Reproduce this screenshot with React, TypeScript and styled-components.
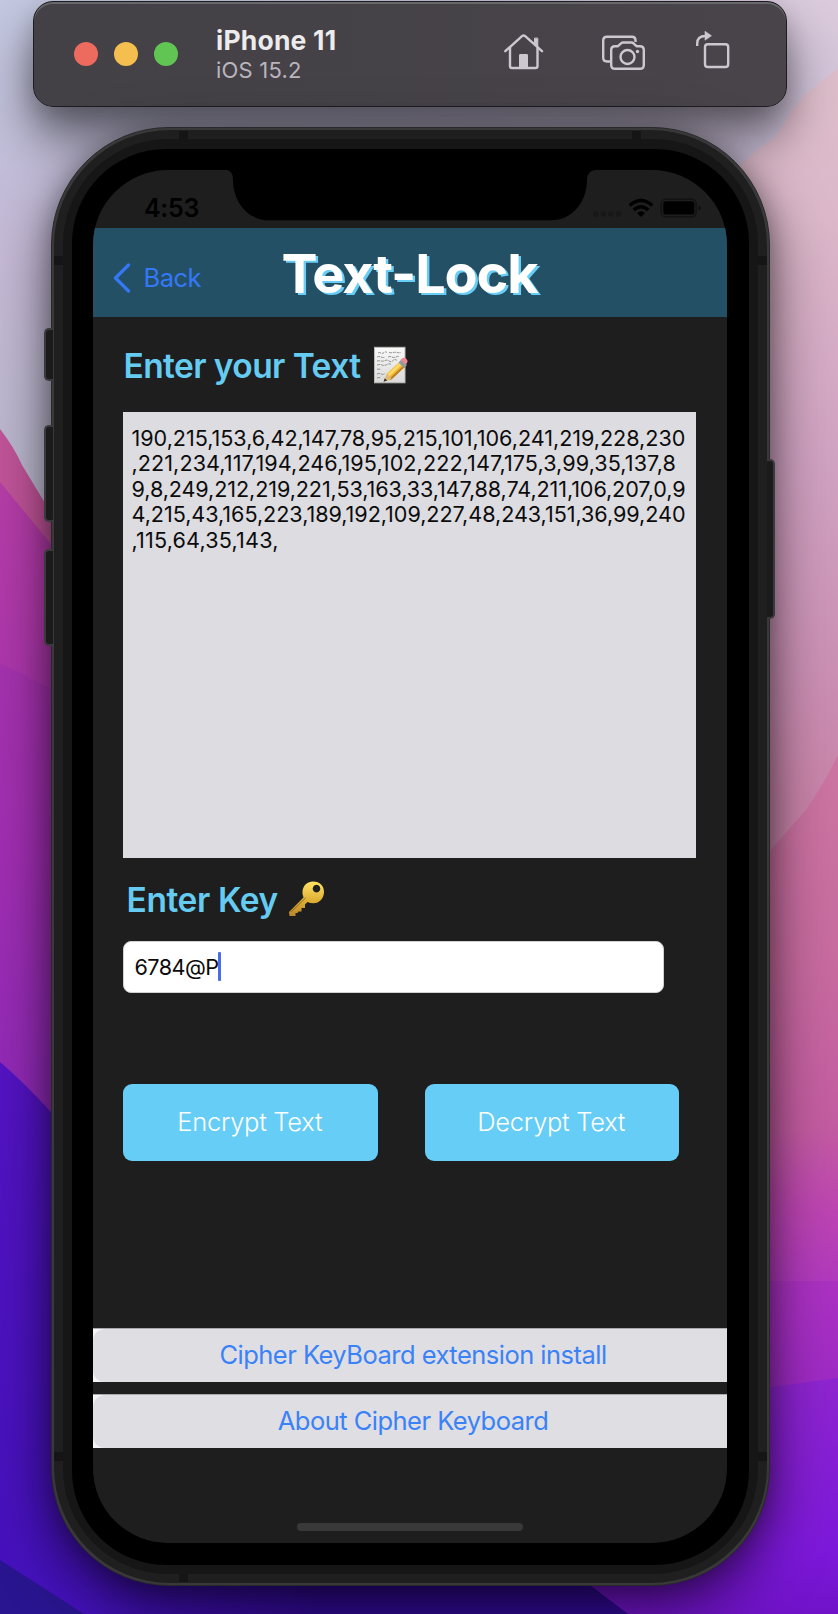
import React from "react";
import styled, { createGlobalStyle } from "styled-components";

const GlobalStyle = createGlobalStyle`
  * { box-sizing: border-box; }
  body {
    margin: 0;
    background: #b8b2cc;
    font-family: Inter, "Liberation Sans", sans-serif;
  }
`;

const Desktop = styled.main`
  position: relative;
  width: 838px;
  height: 1614px;
  overflow: hidden;
  display: flex;
  flex-direction: column;
  align-items: flex-start;
`;

const WallpaperArt = styled.svg`
  position: absolute;
  inset: 0;
`;

const Toolbar = styled.header`
  position: relative;
  display: flex;
  align-items: center;
  width: 754px;
  height: 106px;
  margin: 1px 0 0 33px;
  padding-left: 40px;
  border: 1px solid #1d1c20;
  border-radius: 20px;
  background: linear-gradient(90deg, #434046, #48444a);
  box-shadow: inset 0 2px 0 #68686b, 0 30px 48px rgba(0, 0, 0, 0.5),
    0 8px 22px rgba(0, 0, 0, 0.16);
`;

const Lights = styled.div`
  display: flex;
  gap: 16px;
  width: 142px;
`;

const Light = styled.span<{ $color: string }>`
  width: 24px;
  height: 24px;
  border-radius: 50%;
  background: ${(p) => p.$color};
`;

const DeviceInfo = styled.div`
  width: 286px;
  white-space: nowrap;
`;

const DeviceName = styled.h1`
  margin: 0;
  font-size: 26.5px;
  line-height: 31px;
  font-weight: 700;
  letter-spacing: 0.2px;
  color: #ececec;
`;

const DeviceOs = styled.p`
  margin: 0;
  font-size: 22px;
  line-height: 28px;
  letter-spacing: 0.2px;
  color: #b9b5bd;
`;

const ToolIcons = styled.div`
  display: flex;
  height: 44px;
  margin-top: -4px;
`;

const Phone = styled.section`
  position: relative;
  width: 719px;
  height: 1459px;
  margin: 20px 0 0 50.5px;
  padding: 2px;
  border-radius: 118px;
  background: #39393a;
  border: 1px solid #29282a;
  box-shadow: 0 22px 60px rgba(0, 0, 0, 0.58), 0 2px 24px rgba(0, 0, 0, 0.28);
`;

const Frame = styled.div`
  position: relative;
  width: 100%;
  height: 100%;
  padding: 9px;
  border-radius: 116px;
  background: #1f1f1f;
`;

const InnerFrame = styled.div`
  position: relative;
  height: 100%;
  padding: 9.5px 9px;
  border-radius: 105px;
  background: #161616;
`;

const Bezel = styled.div`
  height: 100%;
  padding: 21px 22px 22px 21px;
  border-radius: 94px;
  background: #000;
`;

const Antenna = styled.i<{ $x: number; $y: number }>`
  position: absolute;
  left: ${(p) => p.$x}px;
  top: ${(p) => p.$y}px;
  width: 9px;
  height: 9px;
  background: #151515;
`;

const SideButton = styled.i<{ $top: number; $height: number; $right?: boolean }>`
  position: absolute;
  top: ${(p) => p.$top}px;
  ${(p) => (p.$right ? "right: -6px;" : "left: -8px;")}
  width: 9px;
  height: ${(p) => p.$height}px;
  border: 2px solid #3a393b;
  ${(p) => (p.$right ? "border-left: 0;" : "border-right: 0;")}
  border-radius: ${(p) => (p.$right ? "0 5px 5px 0" : "5px 0 0 5px")};
  background: #1b1b1b;
`;

const Screen = styled.div`
  display: flex;
  flex-direction: column;
  height: 100%;
  border-radius: 75px;
  overflow: hidden;
  background: #1e1e1e;
`;

const StatusBar = styled.div`
  position: relative;
  flex: none;
  display: flex;
  justify-content: space-between;
  height: 58px;
  padding: 23px 25px 0 51.5px;
`;

const Clock = styled.span`
  position: relative;
  font-size: 25px;
  line-height: 30px;
  font-weight: 600;
  letter-spacing: -0.3px;
  color: #000;
`;

const NotchArt = styled.svg`
  position: absolute;
  left: 130px;
  top: 0;
`;

const StatusIcons = styled.svg`
  position: relative;
  margin-top: 4px;
`;

const NavBar = styled.nav`
  flex: none;
  display: grid;
  grid-template-columns: 189px 1fr;
  align-items: center;
  height: 89px;
  background: #245066;
`;

const BackLink = styled.a`
  display: flex;
  align-items: center;
  gap: 13px;
  padding: 11px 0 0 20px;
  font-size: 25.5px;
  line-height: 32px;
  letter-spacing: -0.5px;
  color: #3478f6;
`;

const AppTitle = styled.h2`
  margin: 0;
  padding-top: 3px;
  font-size: 54px;
  line-height: 60px;
  font-weight: 700;
  letter-spacing: -1.1px;
  color: #fff;
  text-shadow: 2.5px 1.5px 0 #68cef6;
  white-space: nowrap;
`;

const Content = styled.div`
  display: flex;
  flex-direction: column;
  padding: 0 30.5px;
  height: 1011px;
  flex: none;
`;

const FieldLabel = styled.label<{ $indent: number }>`
  display: flex;
  align-items: center;
  padding-left: ${(p) => p.$indent}px;
  font-size: 33.5px;
  line-height: 40px;
  font-weight: 600;
  color: #66cbf1;
  white-space: nowrap;

  svg {
    margin-top: -2px;
  }
`;

const TextLabel = styled(FieldLabel)`
  margin-top: 29px;
  gap: 14px;
  letter-spacing: -0.58px;
`;

const KeyLabel = styled(FieldLabel)`
  margin-top: 22px;
  gap: 10px;
  letter-spacing: -0.4px;
`;

const CipherText = styled.div`
  height: 446px;
  margin-top: 26px;
  padding: 14px 0 0 8.5px;
  background: #dddce1;
  color: #0c0c0c;
  font-size: 21.6px;
  line-height: 25.6px;
  white-space: nowrap;
`;

const CipherLine = styled.div<{ $tracking: number }>`
  letter-spacing: ${(p) => p.$tracking}px;
`;

const KeyInput = styled.div`
  display: flex;
  align-items: center;
  width: 541px;
  height: 52px;
  margin-top: 21px;
  padding-left: 10.5px;
  border: 1px solid #d0d0d2;
  border-radius: 8px;
  background: #fff;
  color: #0c0c0c;
  font-size: 21.6px;
  letter-spacing: -0.55px;
`;

const Caret = styled.i`
  width: 3px;
  height: 29px;
  border-radius: 1px;
  background: #4a6ce8;
`;

const Actions = styled.div`
  display: flex;
  gap: 47px;
  margin-top: 91.5px;
`;

const ActionButton = styled.button`
  width: 254.5px;
  height: 77px;
  padding: 0 1px 2px 0;
  border: 0;
  border-radius: 9px;
  background: #66cdf6;
  color: #fff;
  font: 300 25.5px Inter, sans-serif;
  letter-spacing: -0.28px;
  white-space: nowrap;
`;

const Links = styled.div`
  display: flex;
  flex-direction: column;
  gap: 12px;
  flex: none;
`;

const LinkRow = styled.div`
  height: 54px;
  border-top: 1px solid #aaa9ad;
  background: #f5f5f8;
`;

const LinkButton = styled.a`
  display: flex;
  justify-content: center;
  height: 53px;
  padding-left: 7px;
  border-radius: 12px 0 0 12px;
  background: #dfdee3;
  color: #3a82f7;
  font-size: 25.5px;
  line-height: 51px;
  letter-spacing: -0.52px;
  white-space: nowrap;
`;

const HomeIndicator = styled.div`
  flex: none;
  width: 226px;
  height: 8px;
  margin: 75px auto 0;
  border-radius: 4px;
  background: #393939;
`;

const Wallpaper = () => (
  <WallpaperArt width="838" height="1614" viewBox="0 0 838 1614">
    <defs>
      <linearGradient id="sky" x1="0" y1="0" x2="1" y2="0">
        <stop offset="0" stopColor="#c3c8e0" />
        <stop offset="0.55" stopColor="#c3c2d8" />
        <stop offset="1" stopColor="#dccbdc" />
      </linearGradient>
      <linearGradient id="skyFade" x1="0" y1="0" x2="0" y2="1">
        <stop offset="0" stopColor="#bcb3d0" stopOpacity="0" />
        <stop offset="0.5" stopColor="#c6bad7" />
        <stop offset="1" stopColor="#b8b7cc" />
      </linearGradient>
      <linearGradient id="rose" gradientUnits="userSpaceOnUse" x1="0" y1="70" x2="0" y2="800">
        <stop offset="0" stopColor="#debecb" />
        <stop offset="0.2" stopColor="#dcb8ca" />
        <stop offset="0.55" stopColor="#d1a2c2" />
        <stop offset="0.8" stopColor="#cc92b6" />
        <stop offset="1" stopColor="#c984a9" />
      </linearGradient>
      <linearGradient id="pink" gradientUnits="userSpaceOnUse" x1="0" y1="750" x2="0" y2="1290">
        <stop offset="0" stopColor="#cd76a2" />
        <stop offset="0.4" stopColor="#c86ba0" />
        <stop offset="0.7" stopColor="#c45ca2" />
        <stop offset="0.85" stopColor="#bd45b2" />
        <stop offset="1" stopColor="#b038c0" />
      </linearGradient>
      <linearGradient id="orchid" gradientUnits="userSpaceOnUse" x1="0" y1="1281" x2="0" y2="1390">
        <stop offset="0" stopColor="#ac32c2" />
        <stop offset="1" stopColor="#9e2ac6" />
      </linearGradient>
      <linearGradient id="violet" gradientUnits="userSpaceOnUse" x1="0" y1="1370" x2="0" y2="1614">
        <stop offset="0" stopColor="#9026d0" />
        <stop offset="0.75" stopColor="#7c18da" />
        <stop offset="1" stopColor="#7013c8" />
      </linearGradient>
      <linearGradient id="magenta" gradientUnits="userSpaceOnUse" x1="0" y1="480" x2="0" y2="1100">
        <stop offset="0" stopColor="#b73ea8" />
        <stop offset="0.3" stopColor="#ae37ad" />
        <stop offset="0.6" stopColor="#a830b4" />
        <stop offset="1" stopColor="#8c28bd" />
      </linearGradient>
      <linearGradient id="indigo" gradientUnits="userSpaceOnUse" x1="0" y1="1060" x2="0" y2="1614">
        <stop offset="0" stopColor="#5413c4" />
        <stop offset="1" stopColor="#4411bc" />
      </linearGradient>
      <linearGradient id="deep" gradientUnits="userSpaceOnUse" x1="84" y1="0" x2="320" y2="0">
        <stop offset="0" stopColor="#320a96" stopOpacity="0" />
        <stop offset="1" stopColor="#320a96" />
      </linearGradient>
    </defs>
    <rect width="838" height="1614" fill="url(#sky)" />
    <rect width="838" height="520" fill="url(#skyFade)" />
    <path d="M838 68 805 95Q792 108 784 124L774 138Q758 148 746 160L600 300V850H838Z" fill="url(#rose)" />
    <path d="M838 755Q824 784 805 811L700 930V1300H838Z" fill="url(#pink)" />
    <path d="M600 1281H838V1614H600Z" fill="url(#orchid)" />
    <path d="M600 1410 838 1378V1614H500Z" fill="url(#violet)" />
    <path d="M0 429Q14 447 22 465L60 528V800H0Z" fill="#c15499" />
    <path d="M0 482 60 555 120 800V1120H0Z" fill="url(#magenta)" />
    <path d="M0 664Q30 676 80 705V1120H0Z" fill="#982cb2" opacity="0.4" />
    <path d="M0 1062Q26 1084 60 1122L590 1585 628 1614H0Z" fill="url(#indigo)" />
    <path d="M0 1560 84 1614H0Z" fill="#29158f" />
    <path d="M84 1540H530L628 1614H84Z" fill="url(#deep)" />
  </WallpaperArt>
);

const HomeIcon = () => (
  <svg width="98" height="44" viewBox="502 30 98 44" fill="none" stroke="#cdc7cf" strokeWidth="2.4" strokeLinecap="round" strokeLinejoin="round">
    <path d="M505.3 51.2 522 36.2Q523.6 34.8 525.2 36.2L542 51.2" />
    <path d="M510 47.5V66Q510 68 512 68H535.5Q537.5 68 537.5 66V47.5" />
    <path d="M534.5 38.5V43L537.8 46V38.5Z" fill="#cdc7cf" strokeWidth="1" />
    <path d="M519.5 68V55Q519.5 54.5 520 54.5H527Q527.5 54.5 527.5 55V68Z" fill="#cdc7cf" strokeWidth="1" />
  </svg>
);

const CameraIcon = () => (
  <svg width="94" height="44" viewBox="600 30 94 44" fill="none" stroke="#cdc7cf" strokeWidth="2.4" strokeLinejoin="round">
    <path d="M611 61.5H607Q603.2 61.5 603.2 57.5V40.5Q603.2 36.7 607 36.7H632Q635.5 36.7 635.5 40.5V42" />
    <path d="M615 46.2H618L621.3 43.2Q622 42.5 623.2 42.5H631.5Q632.7 42.5 633.5 43.3L636.5 46.2H640Q643.8 46.2 643.8 50V65Q643.8 68.8 640 68.8H615Q611.2 68.8 611.2 65V50Q611.2 46.2 615 46.2Z" />
    <circle cx="627.5" cy="57" r="7" />
    <circle cx="637.5" cy="51.5" r="1.7" fill="#cdc7cf" stroke="none" />
  </svg>
);

const RotateIcon = () => (
  <svg width="38" height="44" viewBox="694 30 38 44" fill="none" stroke="#cdc7cf" strokeWidth="2.4" strokeLinejoin="round">
    <rect x="705" y="44.2" width="23.2" height="22.8" rx="2.8" />
    <path d="M697.2 46V43.5Q697.2 36 705.5 36" />
    <path d="M705 31.2 711.5 35.8 705 40.2Z" fill="#cdc7cf" strokeWidth="0.6" />
  </svg>
);

const Notch = () => (
  <NotchArt width="375" height="52" viewBox="0 0 375 52">
    <path d="M0 0H4Q10 1 10 10C10 31 24 50.3 46 50.3H328C350 50.3 364 31 364 10Q364 1 372 0V-2H0Z" fill="#000" />
  </NotchArt>
);

const Status = () => (
  <StatusIcons width="109" height="24" viewBox="593 197 109 24">
    <g fill="#171717">
      <circle cx="595.7" cy="214" r="2.8" />
      <circle cx="603.3" cy="214" r="2.8" />
      <circle cx="611" cy="214" r="2.8" />
      <circle cx="618.5" cy="214" r="2.8" />
    </g>
    <path d="M629.7 205.5Q641 195.5 652.3 205.5M633.8 210Q641 203.5 648.2 210" fill="none" stroke="#000" strokeWidth="3.4" />
    <path d="M637 213Q641 209.5 645 213L641 217Z" fill="#000" />
    <rect x="661.2" y="199.2" width="35" height="17.5" rx="4.5" fill="none" stroke="#121212" strokeWidth="1.5" />
    <rect x="663.3" y="201.3" width="31" height="13.2" rx="2.5" fill="#000" />
    <path d="M698.5 205Q701 206 701 208Q701 210 698.5 211Z" fill="#101010" />
  </StatusIcons>
);

const MemoEmoji = () => (
  <svg width="36" height="38" viewBox="0 0 36 38">
    <defs>
      <linearGradient id="paper" x1="0" y1="0" x2="0" y2="1">
        <stop offset="0" stopColor="#fafafa" />
        <stop offset="1" stopColor="#d9d9d9" />
      </linearGradient>
    </defs>
    <rect x="0.5" y="1.3" width="30.5" height="35.5" fill="url(#paper)" stroke="#b9b9b6" />
    <path d="M4 7q1-1 3 0t3-.5 3 0M15 6.5q2 .5 4 0t4 0 4 0M3 11q2-1 4 0t4 0M14 11q2-1 4 0t4 0 3-.5M3 15q2-.5 4 0t4-.5 4 .5 4-.5 4 0M3 19q3-1 5 0t5-.5 4 0M3 23q2 .5 4 0M3 28q2-1 4 0t4-.5M3 32q2-1 4 0" fill="none" stroke="#6b6965" strokeWidth="0.7" strokeDasharray="3 .8" />
    <path d="m10 35.5 3-8 14-13 5 5-15 14Z" fill="#efbb36" />
    <path d="m12.5 29 15-14 2 2-15 14Z" fill="#ffd966" />
    <path d="m15.5 32.5 15-14 1.5 1.5-15 14Z" fill="#bd8022" />
    <path d="m10 35.5 3-8 4.5 5Z" fill="#dfb979" />
    <path d="m9.5 35.8 1.2-3.5 2.5 2.3Z" fill="#333" />
    <path d="m24.5 16.5 3-3 5.5 5.5-3 3Z" fill="#91989f" />
    <path d="m26.5 13.5 2-1.3q2-1.2 4 .8t.5 4l-1.5 1.5Z" fill="#ef8991" />
  </svg>
);

const KeyEmoji = () => (
  <svg width="37" height="38" viewBox="0 0 37 38">
    <defs>
      <linearGradient id="gold" x1="0" y1="0" x2="0" y2="1">
        <stop offset="0" stopColor="#ffe263" />
        <stop offset="0.6" stopColor="#dcab32" />
        <stop offset="1" stopColor="#b9872a" />
      </linearGradient>
    </defs>
    <path fillRule="evenodd" d="M25 1.5C32 1.5 36 6 36 12C36 18 31.5 23.3 25.5 23.3Q22 23.3 19.5 22L17 24.5V28H13.5V31.5H10.5L9.5 33H7.5V36H1.5L1 32 15.5 17.5Q14 14 14.5 11C15.5 5 19.5 1.5 25 1.5ZM28.5 4.8A3.8 3.8 0 1 0 28.51 4.8Z" fill="url(#gold)" />
    <path d="m3 32 14.5-14" stroke="#8f6a22" strokeWidth="1" />
  </svg>
);

const cipherLines: [string, number][] = [
  ["190,215,153,6,42,147,78,95,215,101,106,241,219,228,230", -0.04],
  [",221,234,117,194,246,195,102,222,147,175,3,99,35,137,8", 0.07],
  ["9,8,249,212,219,221,53,163,33,147,88,74,211,106,207,0,9", -0.1],
  ["4,215,43,165,223,189,192,109,227,48,243,151,36,99,240", -0.05],
  [",115,64,35,143,", 0.18],
];

export default function App() {
  return (
    <Desktop>
      <GlobalStyle />
      <Wallpaper />
      <Toolbar>
        <Lights>
          <Light $color="#ec6a5e" />
          <Light $color="#f4bf4f" />
          <Light $color="#61c554" />
        </Lights>
        <DeviceInfo>
          <DeviceName>iPhone 11</DeviceName>
          <DeviceOs>iOS 15.2</DeviceOs>
        </DeviceInfo>
        <ToolIcons>
          <HomeIcon />
          <CameraIcon />
          <RotateIcon />
        </ToolIcons>
      </Toolbar>
      <Phone>
        <SideButton $top={200} $height={53} />
        <SideButton $top={297} $height={97} />
        <SideButton $top={421} $height={97} />
        <SideButton $top={331} $height={160} $right />
        <Frame>
          <Antenna $x={125} $y={1} />
          <Antenna $x={578} $y={1} />
          <Antenna $x={125} $y={1443} />
          <Antenna $x={0} $y={126} />
          <Antenna $x={704} $y={126} />
          <Antenna $x={0} $y={1322} />
          <Antenna $x={704} $y={1322} />
          <InnerFrame>
            <Bezel>
              <Screen>
                <StatusBar>
                  <Notch />
                  <Clock>4:53</Clock>
                  <Status />
                </StatusBar>
                <NavBar>
                  <BackLink>
                    <svg width="18" height="30" viewBox="0 0 18 30" fill="none" stroke="#3478f6" strokeWidth="3.2" strokeLinecap="round" strokeLinejoin="round">
                      <path d="M15.5 2 2.5 15 15.5 28" />
                    </svg>
                    Back
                  </BackLink>
                  <AppTitle>Text-Lock</AppTitle>
                </NavBar>
                <Content>
                  <TextLabel $indent={0.5}>
                    Enter your Text
                    <MemoEmoji />
                  </TextLabel>
                  <CipherText>
                    {cipherLines.map(([line, tracking]) => (
                      <CipherLine key={line} $tracking={tracking}>
                        {line}
                      </CipherLine>
                    ))}
                  </CipherText>
                  <KeyLabel $indent={3.5}>
                    Enter Key
                    <KeyEmoji />
                  </KeyLabel>
                  <KeyInput>
                    6784@P
                    <Caret />
                  </KeyInput>
                  <Actions>
                    <ActionButton>Encrypt Text</ActionButton>
                    <ActionButton>Decrypt Text</ActionButton>
                  </Actions>
                </Content>
                <Links>
                  <LinkRow>
                    <LinkButton>Cipher KeyBoard extension install</LinkButton>
                  </LinkRow>
                  <LinkRow>
                    <LinkButton>About Cipher Keyboard</LinkButton>
                  </LinkRow>
                </Links>
                <HomeIndicator />
              </Screen>
            </Bezel>
          </InnerFrame>
        </Frame>
      </Phone>
    </Desktop>
  );
}
